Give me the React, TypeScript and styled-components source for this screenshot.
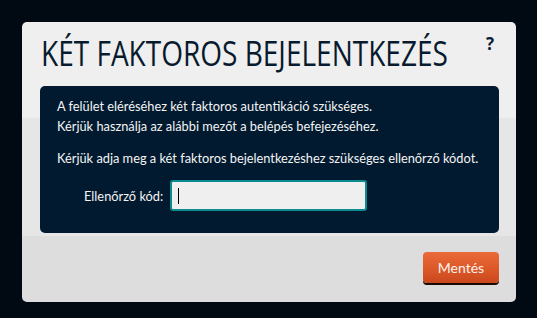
import React, { useState } from 'react';
import styled, { createGlobalStyle } from 'styled-components';

const GlobalStyle = createGlobalStyle`
  html, body {
    margin: 0;
    padding: 0;
    background: #010a13;
    width: 537px;
    height: 318px;
    overflow: hidden;
  }
  * {
    box-sizing: border-box;
  }
`;

const App: React.FC = () => {
  const [code, setCode] = useState('');

  return (
    <>
      <GlobalStyle />
      <Page>
        <Dialog>
          <Header>
            <Title>KÉT FAKTOROS BEJELENTKEZÉS</Title>
            <HelpMark>?</HelpMark>
          </Header>
          <Panel>
            <Text>A felület eléréséhez két faktoros autentikáció szükséges.</Text>
            <Text>Kérjük használja az alábbi mezőt a belépés befejezéséhez.</Text>
            <Text spaced>Kérjük adja meg a két faktoros bejelentkezéshez szükséges ellenőrző kódot.</Text>
            <FieldRow>
              <Label htmlFor="code">Ellenőrző kód:</Label>
              <InputWrap>
                <CodeInput
                  id="code"
                  value={code}
                  onChange={(e) => setCode(e.target.value)}
                />
                {code === '' && <Caret />}
              </InputWrap>
            </FieldRow>
          </Panel>
          <Footer>
            <SaveButton>Mentés</SaveButton>
          </Footer>
        </Dialog>
      </Page>
    </>
  );
};

const Page = styled.div`
  width: 537px;
  height: 318px;
  padding: 22px 21px 0 22px;
`;

const Dialog = styled.div`
  width: 494px;
  height: 280px;
  border-radius: 5px;
  background: linear-gradient(
    to bottom,
    #efefef 0px,
    #efefef 96px,
    #e6e6e6 96px,
    #e6e6e6 214px,
    #dddddd 214px
  );
  padding: 0 17px 0 18px;
  display: flex;
  flex-direction: column;
`;

const Header = styled.div`
  height: 64px;
  display: flex;
  justify-content: space-between;
  align-items: flex-start;
`;

const Title = styled.h1`
  flex: 0 0 410px;
  width: 410px;
  margin: 11px 0 0 1px;
  font-family: 'Open Sans', sans-serif;
  font-weight: normal;
  font-size: 34px;
  line-height: 40px;
  color: #071a2e;
  white-space: nowrap;
  transform: scaleX(0.824);
  transform-origin: left center;
`;

const HelpMark = styled.span`
  margin: 12px 5px 0 0;
  font-family: 'Open Sans', sans-serif;
  font-weight: 700;
  font-size: 17px;
  line-height: 20px;
  color: #0b1e33;
`;

const Panel = styled.div`
  height: 147px;
  background: #011a2f;
  border-radius: 5px;
  padding: 10px 17px 0 17px;
  color: #f4f4f4;
`;

const Text = styled.p<{ spaced?: boolean }>`
  margin: ${({ spaced }) => (spaced ? '12px' : '0')} 0 0 0;
  font-family: 'Lato', sans-serif;
  font-size: 12.8px;
  line-height: 20px;
  white-space: nowrap;
`;

const FieldRow = styled.div`
  display: flex;
  align-items: center;
  gap: 7px;
  margin: 12px 0 0 27px;
`;

const Label = styled.label`
  font-family: 'Lato', sans-serif;
  font-size: 12.8px;
  color: #f4f4f4;
`;

const InputWrap = styled.div`
  position: relative;
  display: flex;
`;

const CodeInput = styled.input`
  width: 197px;
  height: 31px;
  border: 2px solid #0b8a90;
  border-radius: 3px;
  background: #efefef;
  padding: 0 6px;
  font-family: 'Lato', sans-serif;
  font-size: 14px;
  color: #111;
  caret-color: #000;
  outline: none;
`;

const Caret = styled.span`
  position: absolute;
  left: 8px;
  top: 8px;
  width: 1px;
  height: 16px;
  background: #000;
  pointer-events: none;
`;

const Footer = styled.div`
  flex: 1;
  display: flex;
  justify-content: flex-end;
  align-items: flex-start;
  padding-top: 19px;
`;

const SaveButton = styled.button`
  width: 76px;
  height: 31px;
  border: none;
  border-radius: 4px;
  background: linear-gradient(to bottom, #ea6a3a 0%, #dd5a2a 50%, #c9481c 100%);
  box-shadow: 0 2px 0 #1a0a05;
  color: #fff4ee;
  font-family: 'Lato', sans-serif;
  font-size: 14px;
  cursor: pointer;
`;

export default App;
